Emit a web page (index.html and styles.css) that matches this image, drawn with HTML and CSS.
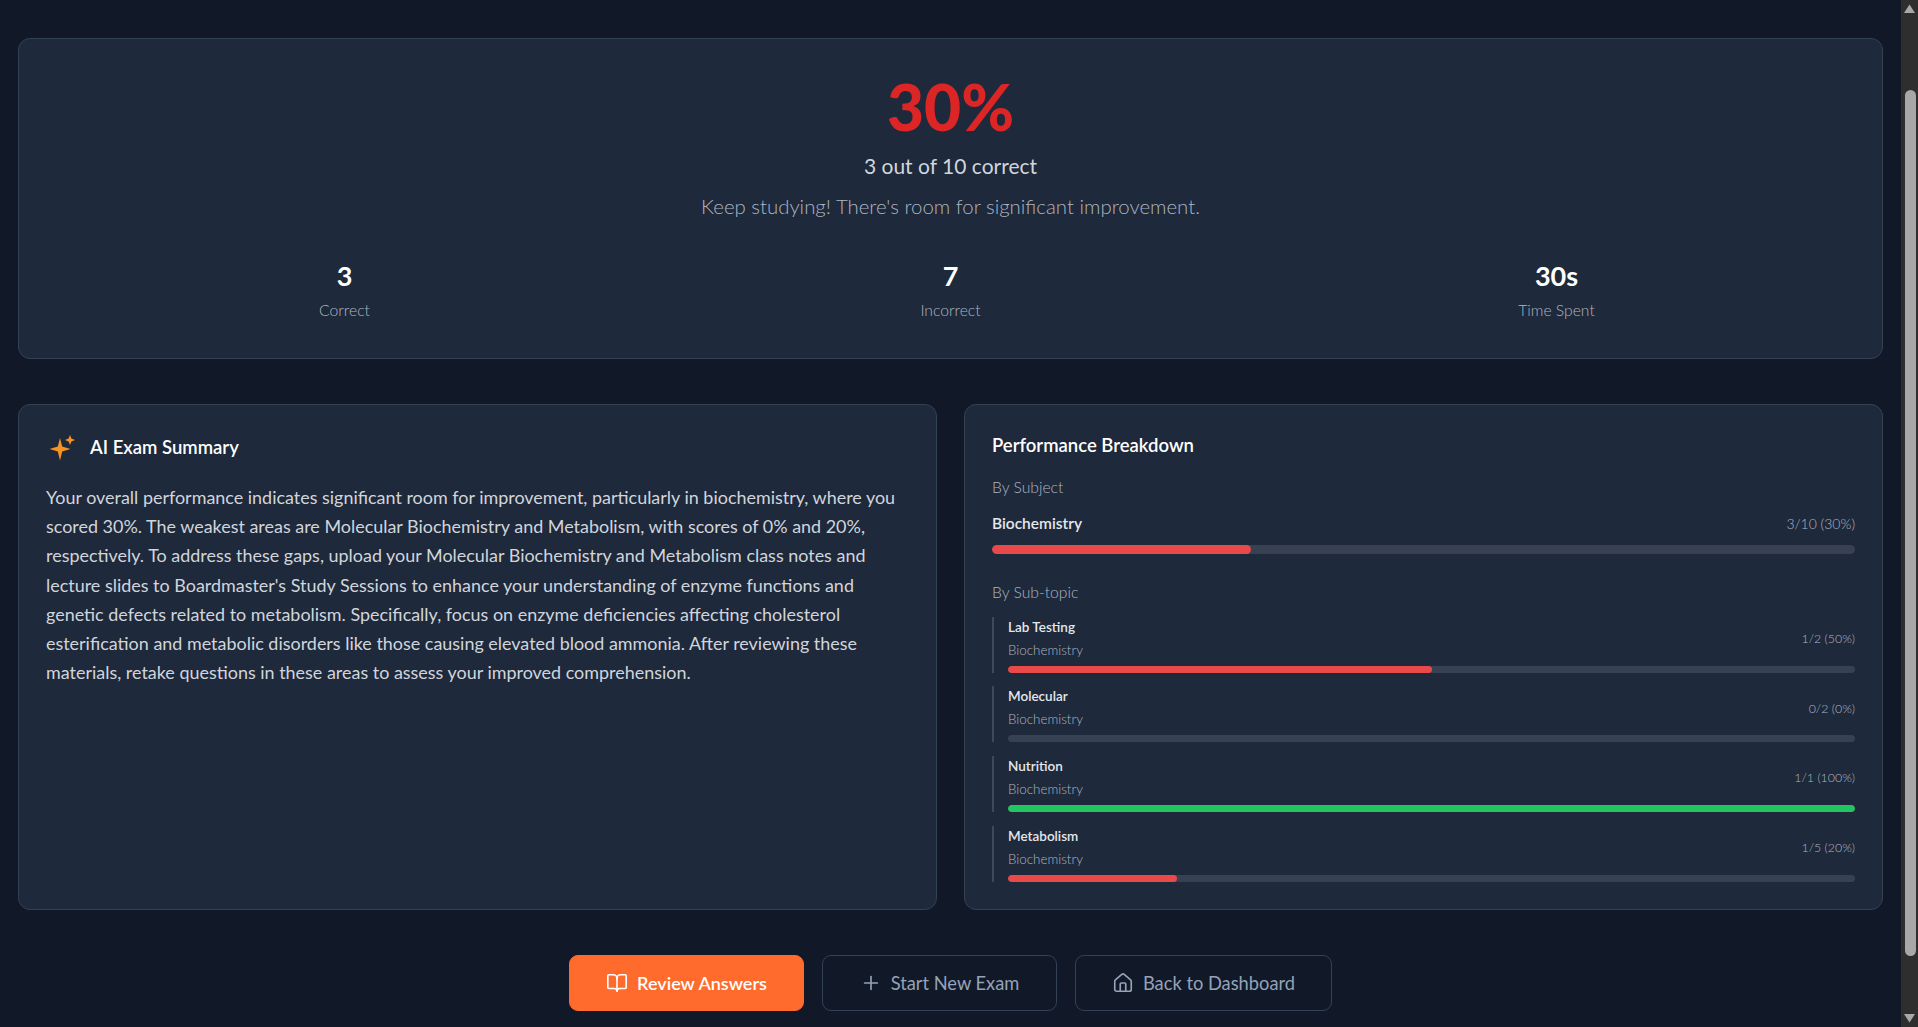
FILE: index.html
```html
<!DOCTYPE html>
<html lang="en">
<head>
<meta charset="utf-8">
<title>Exam Results</title>
<link rel="stylesheet" href="styles.css">
</head>
<body>
<div class="app">
  <main class="page">
    <section class="card score">
      <div class="score-pct">30%</div>
      <div class="score-count">3 out of 10 correct</div>
      <div class="score-msg">Keep studying! There's room for significant improvement.</div>
      <div class="stats">
        <div class="stat"><div class="stat-val">3</div><div class="stat-label">Correct</div></div>
        <div class="stat"><div class="stat-val">7</div><div class="stat-label">Incorrect</div></div>
        <div class="stat"><div class="stat-val">30s</div><div class="stat-label">Time Spent</div></div>
      </div>
    </section>

    <div class="columns">
      <section class="card summary">
        <div class="summary-head">
          <svg class="sparkle" viewBox="0 0 28 28" aria-hidden="true"><path d="M13 5 15.2 13.6 23.5 16 15.2 18.4 13 27.5 10.8 18.4 2.5 16 10.8 13.6Z"/><path d="M23 2 24.4 5.6 28 7 24.4 8.4 23 12 21.6 8.4 18 7 21.6 5.6Z"/></svg>
          <h2 class="card-title">AI Exam Summary</h2>
        </div>
        <p class="summary-text">Your overall performance indicates significant room for improvement, particularly in biochemistry, where you<br>scored 30%. The weakest areas are Molecular Biochemistry and Metabolism, with scores of 0% and 20%,<br>respectively. To address these gaps, upload your Molecular Biochemistry and Metabolism class notes and<br>lecture slides to Boardmaster's Study Sessions to enhance your understanding of enzyme functions and<br>genetic defects related to metabolism. Specifically, focus on enzyme deficiencies affecting cholesterol<br>esterification and metabolic disorders like those causing elevated blood ammonia. After reviewing these<br>materials, retake questions in these areas to assess your improved comprehension.</p>
      </section>

      <section class="card breakdown">
        <h2 class="card-title">Performance Breakdown</h2>
        <div class="group-label first">By Subject</div>
        <div class="subject-row"><span class="subject-name">Biochemistry</span><span class="subject-score">3/10 (30%)</span></div>
        <div class="track big"><div class="fill red" style="width:30%"></div></div>
        <div class="group-label second">By Sub-topic</div>
        <div class="topics">
          <div class="topic">
            <div class="topic-head"><div><div class="topic-name">Lab Testing</div><div class="topic-sub">Biochemistry</div></div><span class="topic-score">1/2 (50%)</span></div>
            <div class="track"><div class="fill red" style="width:50%"></div></div>
          </div>
          <div class="topic">
            <div class="topic-head"><div><div class="topic-name">Molecular</div><div class="topic-sub">Biochemistry</div></div><span class="topic-score">0/2 (0%)</span></div>
            <div class="track"><div class="fill red" style="width:0%"></div></div>
          </div>
          <div class="topic">
            <div class="topic-head"><div><div class="topic-name">Nutrition</div><div class="topic-sub">Biochemistry</div></div><span class="topic-score">1/1 (100%)</span></div>
            <div class="track"><div class="fill green" style="width:100%"></div></div>
          </div>
          <div class="topic">
            <div class="topic-head"><div><div class="topic-name">Metabolism</div><div class="topic-sub">Biochemistry</div></div><span class="topic-score">1/5 (20%)</span></div>
            <div class="track"><div class="fill red" style="width:20%"></div></div>
          </div>
        </div>
      </section>
    </div>

    <div class="actions">
      <a class="btn primary"><svg class="btn-icon" viewBox="0 0 24 24"><path d="M12 7v14"/><path d="M3 18a1 1 0 0 1-1-1V4a1 1 0 0 1 1-1h5a4 4 0 0 1 4 4 4 4 0 0 1 4-4h5a1 1 0 0 1 1 1v13a1 1 0 0 1-1 1h-6a3 3 0 0 0-3 3 3 3 0 0 0-3-3z"/></svg>Review Answers</a>
      <a class="btn ghost"><svg class="btn-icon" viewBox="0 0 24 24"><path d="M5 12h14"/><path d="M12 5v14"/></svg>Start New Exam</a>
      <a class="btn ghost wide"><svg class="btn-icon" viewBox="0 0 24 24"><path d="M15 21v-8a1 1 0 0 0-1-1h-4a1 1 0 0 0-1 1v8"/><path d="M3 10a2 2 0 0 1 .7-1.5l7-6a2 2 0 0 1 2.6 0l7 6a2 2 0 0 1 .7 1.5v9a2 2 0 0 1-2 2H5a2 2 0 0 1-2-2z"/></svg>Back to Dashboard</a>
    </div>
  </main>

  <aside class="scrollbar" aria-hidden="true">
    <svg class="arrow" viewBox="0 0 17 17"><path d="M8.5 4.5 14 13H3Z"/></svg>
    <div class="thumb-area"><div class="thumb"></div></div>
    <svg class="arrow" viewBox="0 0 17 17"><path d="M8.5 12.5 14 4H3Z"/></svg>
  </aside>
</div>
</body>
</html>
```
FILE: styles.css
```css
* { box-sizing: border-box; }
html, body { margin: 0; height: 100%; overflow: hidden; }
body {
  background: #111827;
  color: #fff;
  font-family: "Lato", "Noto Sans", sans-serif;
}
.app { display: flex; height: 1027px; }
.page {
  flex: 1;
  min-width: 0;
  padding: 38px 18px 0;
}
.card {
  background: #1e293b;
  border: 1px solid #334155;
  border-radius: 12px;
}
.score {
  height: 321px;
  padding: 31px 27px 0;
  text-align: center;
}
.score-pct {
  font-size: 64px;
  line-height: 74px;
  font-weight: 900;
  color: #dc2626;
}
.score-count {
  margin-top: 7px;
  font-size: 21px;
  line-height: 30px;
  color: #d1d5db;
}
.score-msg {
  margin-top: 10px;
  font-size: 20.4px;
  line-height: 30px;
  font-weight: 300;
  color: #adb5c1;
}
.stats {
  display: grid;
  grid-template-columns: repeat(3, 1fr);
  column-gap: 9px;
  margin-top: 37px;
}
.stat-val {
  font-size: 27px;
  line-height: 36px;
  font-weight: 700;
}
.stat-label {
  margin-top: 4px;
  font-size: 15.7px;
  line-height: 24px;
  font-weight: 300;
  color: #adb5c1;
}
.columns {
  display: grid;
  grid-template-columns: 1fr 1fr;
  column-gap: 27px;
  margin-top: 45px;
  height: 506px;
}
.summary { padding: 28px 27px 0; }
.summary-head {
  display: flex;
  align-items: center;
  gap: 15px;
  padding-left: 1px;
}
.sparkle { width: 28px; height: 28px; fill: #f7931e; flex: none; }
.card-title {
  margin: 0;
  font-size: 18.5px;
  line-height: 28px;
  font-weight: 600;
  color: #fff;
}
.summary-text {
  margin: 22px 0 0;
  font-size: 17.95px;
  line-height: 29.2px;
  color: #d1d5db;
}
.breakdown { padding: 26px 27px 0; }
.group-label {
  font-size: 15.7px;
  line-height: 24px;
  font-weight: 300;
  color: #adb5c1;
}
.group-label.first { margin-top: 16px; }
.group-label.second { margin-top: 26px; }
.subject-row {
  display: flex;
  justify-content: space-between;
  align-items: center;
  margin-top: 12px;
  height: 24px;
}
.subject-name { font-size: 15.5px; font-weight: 600; color: #e5e7eb; }
.subject-score { font-size: 14px; font-weight: 300; color: #adb5c1; }
.track {
  background: #374151;
  border-radius: 999px;
  height: 7px;
  overflow: hidden;
}
.track.big { height: 9px; margin-top: 10px; }
.fill { height: 100%; border-radius: 999px; }
.fill.red { background: #e94949; }
.fill.green { background: #22c55e; }
.topics {
  display: flex;
  flex-direction: column;
  gap: 13.7px;
  margin-top: 12.6px;
}
.topic {
  border-left: 2px solid #3e4a5c;
  padding-left: 14px;
  height: 56px;
  display: flex;
  flex-direction: column;
  justify-content: space-between;
}
.topic-head {
  display: flex;
  justify-content: space-between;
  align-items: center;
}
.topic-name { font-size: 13.5px; line-height: 20px; font-weight: 600; color: #e5e7eb; }
.topic-sub { font-size: 13.4px; line-height: 22px; margin-top: 2px; font-weight: 300; color: #adb5c1; }
.topic-score { font-size: 12.4px; font-weight: 300; color: #adb5c1; }
.actions {
  display: flex;
  justify-content: center;
  gap: 18px;
  margin-top: 45px;
}
.btn {
  display: flex;
  align-items: center;
  justify-content: center;
  gap: 9px;
  width: 235px;
  height: 56px;
  border-radius: 9px;
  font-size: 18.3px;
  color: #94a3b8;
  border: 1px solid #334155;
}
.btn.wide { width: 257px; }
.btn.primary {
  background: #ff6b2c;
  border-color: #ff6b2c;
  color: #fff;
  font-size: 18px;
  font-weight: 600;
}
.btn-icon {
  width: 22px;
  height: 22px;
  fill: none;
  stroke: currentColor;
  stroke-width: 1.8;
  stroke-linecap: round;
  stroke-linejoin: round;
  flex: none;
}
.scrollbar {
  width: 17px;
  flex: none;
  background: #2e2e2e;
  display: flex;
  flex-direction: column;
}
.arrow { width: 17px; height: 17px; fill: #a8a8a8; flex: none; }
.thumb-area { flex: 1; padding: 73px 2px 54px 4px; }
.thumb { height: 100%; background: #a8a8a8; border-radius: 6px; }
```
